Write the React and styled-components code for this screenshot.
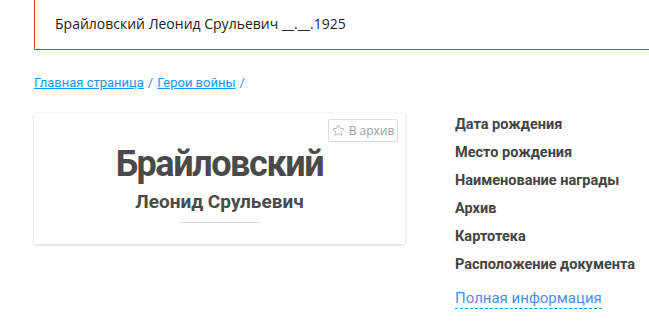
import React from 'react';
import styled, { createGlobalStyle } from 'styled-components';
import { Star } from 'lucide-react';

const GlobalStyle = createGlobalStyle`
  body {
    margin: 0;
    background: #fff;
    font-family: Roboto, "Open Sans", sans-serif;
    color: #444;
  }
`;

const fields = [
  'Дата рождения',
  'Место рождения',
  'Наименование награды',
  'Архив',
  'Картотека',
  'Расположение документа',
];

export default function App() {
  return (
    <Page>
      <GlobalStyle />
      <Header>Брайловский Леонид Срульевич __.__.1925</Header>

      <Crumbs>
        <a href="#">Главная страница</a>
        <Sep>/</Sep>
        <a href="#">Герои войны</a>
        <Sep>/</Sep>
      </Crumbs>

      <Main>
        <Card>
          <ArchiveButton>
            <Star size={13} strokeWidth={1.4} />
            В архив
          </ArchiveButton>
          <Surname>Брайловский</Surname>
          <Names>Леонид Срульевич</Names>
          <Divider />
        </Card>

        <Info>
          {fields.map(f => (
            <Label key={f}>{f}</Label>
          ))}
          <MoreLink href="#">Полная информация</MoreLink>
        </Info>
      </Main>
    </Page>
  );
}

const Page = styled.div`
  padding-left: 34px;
  width: 649px;
  height: 329px;
  box-sizing: border-box;
  overflow: hidden;
`;

const Header = styled.div`
  height: 50px;
  display: flex;
  align-items: center;
  padding-left: 20px;
  padding-bottom: 3px;
  box-sizing: border-box;
  border-left: 1px solid #e53935;
  border-bottom: 1px solid #e53935;
  margin-right: -10px;
  font-family: "Open Sans", sans-serif;
  font-size: 14px;
  color: #222;
`;

const Crumbs = styled.div`
  margin-top: 24px;
  font-size: 13px;
  line-height: 18px;
  color: #2196f3;

  a {
    color: #2196f3;
    text-decoration: underline;
  }
`;

const Sep = styled.span`
  margin: 0 4px;
`;

const Main = styled.div`
  display: flex;
  gap: 50px;
  margin-top: 21px;
`;

const Card = styled.div`
  position: relative;
  width: 371px;
  height: 131px;
  box-sizing: border-box;
  background: #fff;
  box-shadow: 0 1px 3px rgba(0, 0, 0, 0.18);
  display: flex;
  flex-direction: column;
  align-items: center;
  padding-top: 31px;
`;

const ArchiveButton = styled.button`
  position: absolute;
  top: 6px;
  right: 7px;
  height: 23px;
  width: 70px;
  display: flex;
  align-items: center;
  justify-content: center;
  gap: 4px;
  padding: 0;
  border: 1px solid #ddd;
  border-radius: 2px;
  background: #fff;
  color: #9e9e9e;
  font-family: "Open Sans", sans-serif;
  font-size: 12px;
`;

const Surname = styled.div`
  font-size: 36px;
  line-height: 40px;
  font-weight: 700;
  color: #4a4a4a;
  letter-spacing: -1.4px;
`;

const Names = styled.div`
  margin-top: 6px;
  font-size: 19px;
  line-height: 24px;
  font-weight: 700;
  color: #4a4a4a;
`;

const Divider = styled.div`
  margin-top: 8px;
  width: 80px;
  height: 1px;
  background: #ddd;
`;

const Info = styled.div`
  display: flex;
  flex-direction: column;
  align-items: flex-start;
  margin-top: -2px;
`;

const Label = styled.div`
  font-size: 14.5px;
  line-height: 28px;
  font-weight: 700;
  color: #444;
`;

const MoreLink = styled.a`
  margin-top: 9px;
  font-size: 15px;
  line-height: 20px;
  color: #4a8ff0;
  text-decoration: none;
  border-bottom: 1px dashed #2196f3;
`;
